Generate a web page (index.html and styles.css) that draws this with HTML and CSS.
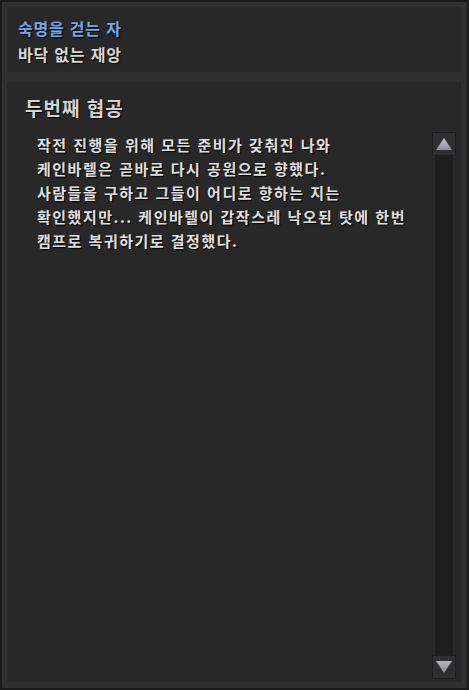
FILE: index.html
```html
<!DOCTYPE html>
<html lang="ko">
<head>
<meta charset="utf-8">
<link rel="stylesheet" href="styles.css">
</head>
<body>
<div class="frame">
  <section class="quest-head">
    <div class="quest-series">숙명을 걷는 자</div>
    <div class="quest-name">바닥 없는 재앙</div>
  </section>
  <section class="quest-body">
    <h2 class="quest-title">두번째 협공</h2>
    <div class="quest-row">
      <div class="quest-text">
        <p>작전 진행을 위해 모든 준비가 갖춰진 나와<br>케인바렐은 곧바로 다시 공원으로 향했다.<br>사람들을 구하고 그들이 어디로 향하는 지는<br>확인했지만... 케인바렐이 갑작스레 낙오된 탓에 한번<br>캠프로 복귀하기로 결정했다.</p>
      </div>
      <div class="scrollbar">
        <div class="sb-btn">
          <svg width="16" height="12" viewBox="0 0 16 12"><defs><linearGradient id="g1" x1="0" y1="0" x2="0" y2="1"><stop offset="0" stop-color="#c4c4cc"/><stop offset="1" stop-color="#8e8e98"/></linearGradient></defs><polygon points="8,0 16,12 0,12" fill="url(#g1)"/></svg>
        </div>
        <div class="sb-track"></div>
        <div class="sb-btn">
          <svg width="16" height="12" viewBox="0 0 16 12"><defs><linearGradient id="g2" x1="0" y1="0" x2="0" y2="1"><stop offset="0" stop-color="#b4b4bc"/><stop offset="1" stop-color="#8e8e98"/></linearGradient></defs><polygon points="0,0 16,0 8,12" fill="url(#g2)"/></svg>
        </div>
      </div>
    </div>
  </section>
</div>
</body>
</html>
```
FILE: styles.css
```css
html, body {
  margin: 0;
  padding: 0;
  background: #1b1b1b;
}
body {
  font-family: "Noto Sans CJK KR", "Noto Sans", sans-serif;
}
.frame {
  box-sizing: border-box;
  width: 469px;
  height: 690px;
  border: 2px solid #1b1b1b;
  background: #303030;
  padding: 5px 6px 6px 5px;
  display: flex;
  flex-direction: column;
  gap: 10px;
}
.quest-head {
  background: #282828;
  height: 65px;
  box-sizing: border-box;
  padding: 9px 0 0 11px;
  font-size: 16px;
  letter-spacing: 0.8px;
  line-height: 25px;
  font-weight: 700;
  text-shadow: 1px 1px 1px #000;
}
.quest-series { color: #74a6ec; }
.quest-name { color: #d8d8d8; margin-top: 1px; }
.quest-body {
  flex: 1;
  background: #282828;
  display: flex;
  flex-direction: column;
  min-height: 0;
}
.quest-title {
  margin: 0;
  padding: 14px 0 0 18px;
  font-size: 19px;
  line-height: 24px;
  letter-spacing: 1px;
  font-weight: 700;
  color: #d4d4d4;
  text-shadow: 1px 1px 1px #000;
}
.quest-row {
  flex: 1;
  display: flex;
  margin-top: 12px;
  margin-bottom: 3px;
  min-height: 0;
}
.quest-text {
  flex: 1;
  padding: 1px 0 0 30px;
}
.quest-text p {
  margin: 0;
  font-size: 15px;
  line-height: 24px;
  letter-spacing: 1.5px;
  font-weight: 700;
  color: #e0e0e0;
  text-shadow: 1px 1px 1px #000;
}
.scrollbar {
  width: 24px;
  margin-right: 5px;
  display: flex;
  flex-direction: column;
  align-items: center;
}
.sb-btn {
  box-sizing: border-box;
  width: 24px;
  height: 24px;
  background: #2f2f31;
  border: 1px solid #1d1d1d;
  display: flex;
  align-items: center;
  justify-content: center;
}
.sb-track {
  flex: 1;
  width: 18px;
  background: #1e1e1e;
}
```
